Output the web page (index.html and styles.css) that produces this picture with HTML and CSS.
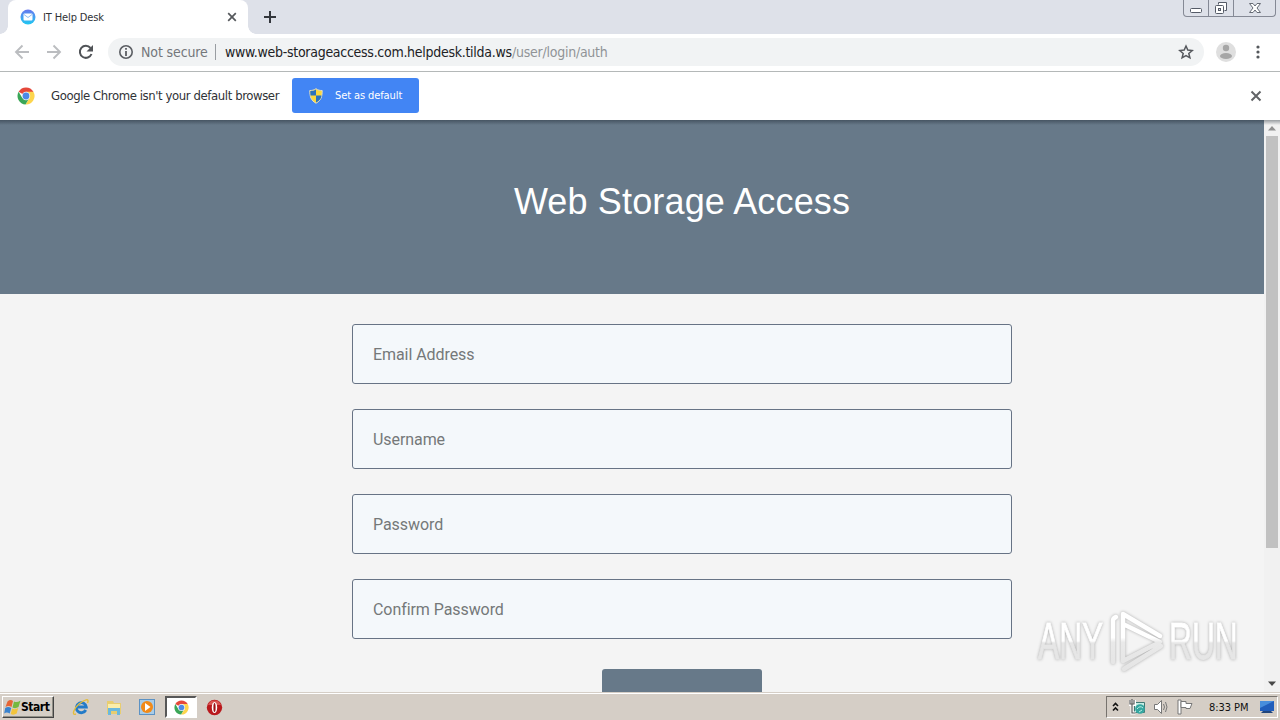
FILE: index.html
```html
<!DOCTYPE html>
<html lang="en">
<head>
<meta charset="utf-8">
<title>IT Help Desk</title>
<link rel="stylesheet" href="styles.css">
</head>
<body>
<svg class="defs" width="0" height="0">
  <symbol id="chrome" viewBox="0 0 18 18">
    <path d="M9 9 1.600 4.800A8.500 8.500 0 0 1 16.400 4.800Z" fill="#e5483a"/>
    <path d="M9 4.800h7.400A8.500 8.500 0 0 1 8.500 17.500L12.600 11Z" fill="#fdd54d"/>
    <path d="M5.300 11 1.600 4.800A8.500 8.500 0 0 0 8.500 17.500L12 11.500Z" fill="#3aa657"/>
    <circle cx="9" cy="9" r="4.200" fill="#f4f6f8"/>
    <circle cx="9" cy="9" r="3.400" fill="#4d8ae6"/>
  </symbol>
</svg>
<div class="desktop">
  <header class="tabstrip">
    <div class="tab">
      <svg class="favicon" width="16" height="16" viewBox="0 0 16 16"><defs><linearGradient id="mail" x2="0" y2="1"><stop stop-color="#6978ef"/><stop offset="1" stop-color="#20c8f1"/></linearGradient></defs><circle cx="8" cy="8" r="7.500" fill="url(#mail)"/><rect x="3.500" y="4.500" width="9" height="7" rx="1" fill="#fff"/><path d="m4 5.500 4 3 4-3" fill="none" stroke="#8fbdf3"/></svg>
      <span class="tab-title">IT Help Desk</span>
      <svg class="tab-close" width="10" height="10" viewBox="0 0 10 10"><path d="m1.200 1.200 7.600 7.600m0-7.600L1.200 8.800" stroke="#55585c" stroke-width="1.700"/></svg>
    </div>
    <svg class="new-tab" width="14" height="14" viewBox="0 0 14 14"><path d="M7 1v12M1 7h12" stroke="#33363c" stroke-width="2"/></svg>
    <div class="window-buttons">
      <span><svg width="14" height="16" viewBox="0 0 14 16"><rect x="1.500" y="8.500" width="11" height="4" rx="1" fill="#fff" stroke="#555b67"/></svg></span>
      <span><svg width="14" height="16" viewBox="0 0 14 16"><path d="M4.500 4.500v-2h8v8h-2" fill="#fff" stroke="#555b67"/><rect x="1.500" y="5.500" width="8" height="8" rx="1" fill="#fff" stroke="#555b67"/><rect x="4.500" y="8.500" width="2" height="2" fill="#dee1e9" stroke="#555b67"/></svg></span>
      <span class="wide"><svg width="14" height="16" viewBox="0 0 14 16"><path d="M1.500 3.500h3.500l2 2.500 2-2.500h3.500L9 8l3.500 4.500H9L7 10l-2 2.500H1.500L5 8Z" fill="#fff" stroke="#666b75"/></svg></span>
    </div>
  </header>
  <nav class="toolbar">
    <div class="nav-buttons">
      <svg width="16" height="16" viewBox="0 0 16 16"><path d="M15 8H2m6.500-6.500L2 8l6.500 6.500" fill="none" stroke="#bbbdc0" stroke-width="1.900"/></svg>
      <svg width="16" height="16" viewBox="0 0 16 16"><path d="M1 8h13M7.500 1.500 14 8l-6.500 6.500" fill="none" stroke="#bbbdc0" stroke-width="1.900"/></svg>
      <svg width="16" height="16" viewBox="0 0 16 16"><path d="M13.500 10A6 6 0 1 1 12.500 4" fill="none" stroke="#505357" stroke-width="2"/><path d="M15 1v6.500H8.500Z" fill="#505357"/></svg>
    </div>
    <div class="omnibox">
      <svg width="16" height="16" viewBox="0 0 16 16"><circle cx="8" cy="8" r="6.200" fill="none" stroke="#5b5e63" stroke-width="1.600"/><path d="M8 7v5M8 4v1.800" stroke="#5b5e63" stroke-width="1.800"/></svg>
      <span class="secure">Not secure</span>
      <span class="url"><span class="host">www.web-storageaccess.com.helpdesk.tilda.ws</span><span class="path">/user/login/auth</span></span>
      <svg class="star" width="16" height="16" viewBox="0 0 16 16"><path d="m8 2 1.800 4.100 4.400.4-3.400 2.900 1.100 4.400L8 11.500l-3.900 2.300 1.100-4.400-3.400-2.900 4.400-.4Z" fill="none" stroke="#55585d" stroke-width="1.500"/></svg>
    </div>
    <svg class="avatar" width="20" height="20" viewBox="0 0 20 20"><circle cx="10" cy="10" r="10" fill="#dfdfdf"/><circle cx="10" cy="6" r="3.200" fill="#a6a6a6"/><ellipse cx="10" cy="14" rx="6" ry="3" fill="#a6a6a6"/></svg>
    <svg class="kebab" width="4" height="14" viewBox="0 0 4 14"><g fill="#55585c"><circle cx="2" cy="2" r="1.600"/><circle cx="2" cy="7" r="1.600"/><circle cx="2" cy="12" r="1.600"/></g></svg>
  </nav>
  <div class="infobar">
    <svg class="brand" width="18" height="18"><use href="#chrome"/></svg>
    <span class="info-text">Google Chrome isn't your default browser</span>
    <button class="default-button"><svg width="14" height="16" viewBox="0 0 14 16"><path d="M7 .700C5 2.200 3 2.500.800 2.500c0 6 1 10 6.200 12.700 5.200-2.700 6.200-6.700 6.200-12.700C11 2.500 9 2.200 7 .700Z" fill="#fbd83d" stroke="#e2dfc4"/><path d="M7 1.500v6H1.500Q1.200 5 1.300 3 5 3 7 1.500ZM7 7.500h5.500Q12 12 7 14.500Z" fill="#2c72bd"/></svg><span>Set as default</span></button>
    <svg class="info-close" width="12" height="12" viewBox="0 0 12 12"><path d="m1.500 1.500 9 9m0-9-9 9" stroke="#626467" stroke-width="2"/></svg>
  </div>
  <main class="viewport">
    <div class="page">
      <section class="hero"><h1>Web Storage Access</h1></section>
      <form class="login">
        <input type="text" placeholder="Email Address">
        <input type="text" placeholder="Username">
        <input type="password" placeholder="Password">
        <input type="password" placeholder="Confirm Password">
        <button type="button" class="submit" aria-label="Submit"></button>
      </form>
    </div>
    <div class="scrollbar">
      <svg width="16" height="16" viewBox="0 0 16 16"><path d="M4 10.500h8L8 6Z" fill="#909090"/></svg>
      <div class="thumb"></div>
      <svg width="16" height="16" viewBox="0 0 16 16"><path d="M4 5.500h8L8 10Z" fill="#484848"/></svg>
    </div>
    <div class="watermark">
      <span class="any">ANY</span>
      <svg width="60" height="66" viewBox="0 0 60 66"><defs><linearGradient id="fade" gradientUnits="userSpaceOnUse" x1="0" y1="0" x2="0" y2="66"><stop offset=".45" stop-color="#fff"/><stop offset=".52" stop-color="#e9e9e9"/><stop offset="1" stop-color="#e4e4e4"/></linearGradient></defs><path d="M7 54V13q0-3 3-4M17 44V6l37 22M17 16l37 18-37 19V42M18 61l37-23" fill="none" stroke="url(#fade)" stroke-width="4.500" stroke-linejoin="round" stroke-linecap="round"/></svg>
      <span class="run">RUN</span>
    </div>
  </main>
  <footer class="taskbar">
    <button class="start"><svg width="17" height="17" viewBox="0 0 17 17"><path d="M3.500 2.500q3-2.500 5.500-.5L7.500 8Q4.500 6 1.500 8Z" fill="#e66535"/><path d="M10 2.500q3 1.500 6.500-1L14.500 8q-3 2-6 .5Z" fill="#75b840"/><path d="M1.200 9q3-2 6 0l-1.500 5.500q-3-2-5.500 0Z" fill="#3982ce"/><path d="M8.200 9.500q3 1.500 6-.5l-1.500 5.500q-3 2-6 .5Z" fill="#f3c43b"/></svg><span>Start</span></button>
    <div class="tasks">
      <span class="task"><svg width="18" height="18" viewBox="0 0 18 18"><path d="M13.800 12A5 5 0 1 1 14.300 9H5.500" fill="none" stroke="#237bc8" stroke-width="2.800"/><path d="M4 16C-1 18 2 10 7 6S18-.500 15.500 5" fill="none" stroke="#e4bd3b" stroke-width="1.400"/></svg></span>
      <span class="task"><svg width="18" height="18" viewBox="0 0 18 18"><path d="M2 3h6l1 2h7v11H2Z" fill="#e8cd70"/><path d="M3 6h12v6H3Z" fill="#fbedaa"/><path d="M3 10h12v7h-3v-4H6v4H3Z" fill="#6bb8dd"/></svg></span>
      <span class="task"><svg width="18" height="18" viewBox="0 0 18 18"><rect x="1.500" y="1.500" width="15" height="15" fill="#a9cce7" stroke="#5c92c4"/><circle cx="9" cy="9" r="6" fill="#f28a18"/><path d="m7 5 5.500 4L7 13Z" fill="#fff"/></svg></span>
      <span class="task active"><svg width="15" height="15"><use href="#chrome"/></svg></span>
      <span class="task"><svg width="17" height="17" viewBox="0 0 17 17"><circle cx="8.500" cy="8.500" r="7.700" fill="#b9191d"/><path d="M2 6a7 7 0 0 1 13 0Z" fill="#d95552"/><ellipse cx="8.500" cy="8.500" rx="2.700" ry="5.500" fill="#fff"/><ellipse cx="8.500" cy="8.500" rx="1.100" ry="4.600" fill="#9e1115"/></svg></span>
    </div>
    <div class="tray">
      <svg width="7" height="10" viewBox="0 0 7 10"><path d="m1 4 2.500-2.500L6 4M1 8.500 3.500 6 6 8.500" fill="none" stroke="#111" stroke-width="1.600"/></svg>
      <svg class="network" width="16" height="16" viewBox="0 0 16 16"><path d="M5.500 3.500h10v10h-10Z" fill="#c5eee5" stroke="#3f7975"/><path d="M.500 1v4.500h5V1M3 1v13h3.500" fill="none" stroke="#fff" stroke-width="3"/><path d="M1 1v4h4V1M3 0v14h3.500" fill="none" stroke="#5c5c5c" stroke-width="1.200"/><circle cx="11" cy="10" r="4.800" fill="#35a6a0"/><path d="M8 10q3-4 6-1m-4 4 3-2" fill="none" stroke="#bdeee4"/></svg>
      <svg class="sound" width="17" height="16" viewBox="0 0 17 16"><path d="M1.500 5.500h3l4-4v13l-4-4h-3Z" fill="#fff" stroke="#777"/><path d="M10.500 5q2 3 0 6m2-8q3 5 0 10" fill="none" stroke="#777"/></svg>
      <svg class="flag" width="17" height="16" viewBox="0 0 17 16"><path d="M1 1h3v14H1Z" fill="#fff" stroke="#777"/><path d="M4 2.500h5v2h6L13 9.500H9V8.500H4Z" fill="#fff" stroke="#777"/></svg>
      <time>8:33 PM</time>
      <svg class="display" width="16" height="14" viewBox="0 0 16 14"><path d="M1 1h14v10H1Z" fill="#205dbb"/><path d="M1 1h14L1 8Z" fill="#478ddc"/><path d="M4 11h8l2 2H2Z" fill="#21457c"/></svg>
    </div>
  </footer>
</div>
</body>
</html>
```
FILE: styles.css
```css
* { box-sizing: border-box; }
body { margin: 0; font-family: "DejaVu Sans Condensed", "DejaVu Sans", sans-serif; color: #303236; }
svg { display: block; flex: none; }
button { border: 0; padding: 0; font: inherit; }
.defs { position: absolute; }
.desktop { width: 1280px; height: 720px; overflow: hidden; display: flex; flex-direction: column; background: #fff; white-space: nowrap; }

.tabstrip { height: 34px; flex: none; display: flex; align-items: flex-start; background: #dee1e9; padding-left: 8px; }
.tab { width: 240px; height: 34px; display: flex; align-items: center; background: #fff; border-radius: 8px 8px 0 0; padding: 0 11px 0 12px; position: relative; }
.tab::before, .tab::after { content: ""; position: absolute; bottom: 0; width: 8px; height: 8px; }
.tab::before { left: -8px; background: radial-gradient(circle at 0 0, transparent 7.5px, #fff 8px); }
.tab::after { right: -8px; background: radial-gradient(circle at 100% 0, transparent 7.5px, #fff 8px); }
.tab-title { margin-left: 7px; font-size: 11px; letter-spacing: -.12px; }
.tab-close { margin-left: auto; }
.new-tab { margin: 10px 0 0 15px; }
.window-buttons { width: 93px; height: 17px; display: flex; margin-left: auto; margin-right: 4px; border: 1px solid #858995; border-top: 0; border-radius: 0 0 4px 4px; }
.window-buttons span { width: 25px; display: flex; justify-content: center; border-right: 1px solid #858995; }
.window-buttons .wide { flex: 1; border: 0; }

.toolbar { height: 38px; flex: none; display: flex; align-items: center; border-bottom: 1px solid #b4b8b8; padding-bottom: 1px; }
.nav-buttons { width: 108px; display: flex; gap: 16px; padding-left: 14px; }
.omnibox { width: 1096px; height: 28px; display: flex; align-items: center; background: #f1f3f4; border-radius: 14px; padding: 0 10px; font-size: 14px; }
.secure { width: 74px; margin-left: 7px; color: #74777b; letter-spacing: -.12px; }
.url { display: flex; border-left: 1px solid #999da2; padding-left: 9px; line-height: 16px; }
.host { width: 287px; color: #202124; letter-spacing: -.28px; }
.path { color: #909397; letter-spacing: -.25px; }
.star { margin-left: auto; }
.avatar { margin-left: 12px; }
.kebab { margin-left: 20px; }

.infobar { height: 48px; flex: none; display: flex; align-items: center; padding: 0 18px 1px 17px; }
.info-text { width: 241px; margin-left: 16px; font-size: 13px; letter-spacing: -.41px; }
.default-button { width: 127px; height: 35px; display: flex; align-items: center; background: #4285f4; color: #fff; border-radius: 3px; padding-left: 17px; font-size: 11px; }
.default-button span { margin-left: 12px; letter-spacing: -.1px; }
.info-close { margin: 1px 0 0 auto; }

.viewport { height: 572px; flex: none; display: flex; position: relative; overflow: hidden; background: #f4f4f4; }
.viewport::before { content: ""; position: absolute; top: 0; left: 0; width: 100%; height: 5px; background: linear-gradient(rgba(20,30,40,.4), transparent); }
.page { width: 1264px; }
.hero { height: 174px; background: #677989; padding: 60px 0 0 352px; }
h1 { width: 660px; margin: 0; text-align: center; color: #fff; font: 400 36px/44px "Liberation Sans", Arial, sans-serif; letter-spacing: .15px; }
.login { width: 660px; display: flex; flex-direction: column; gap: 25px; margin: 30px 0 0 352px; }
.login input { width: 100%; height: 60px; border: 1px solid #677385; border-radius: 3px; background: #f4f8fb; padding: 0 20px; font: 16px Roboto, sans-serif; letter-spacing: -.07px; }
.login input::placeholder { color: #757879; opacity: 1; }
.submit { width: 160px; height: 60px; align-self: center; margin-top: 5px; background: #677989; border-radius: 3px; }
.scrollbar { width: 16px; display: flex; flex-direction: column; background: #f1f1f1; }
.thumb { width: 12px; height: 412px; margin: 0 2px auto; background: #c1c1c1; }
.watermark { position: absolute; left: 1038px; top: 488px; display: flex; align-items: center; font: 400 52px/66px "Liberation Sans", sans-serif; filter: drop-shadow(0 0 1.5px #aaa); }
.watermark span { width: 66px; color: transparent; background: linear-gradient(#fff 50%, #e6e6e6 53%); background-clip: text; -webkit-background-clip: text; -webkit-text-stroke: 1px transparent; }
.watermark .any, .watermark .run { width: 112px; margin-right: -46px; transform: scaleX(.61); transform-origin: left; }
.watermark svg { margin: 0 3px 0 2px; }

.taskbar { height: 28px; flex: none; display: flex; background: #d5cec6; border-top: 1px solid #d5cec6; box-shadow: inset 0 1px #fff; padding: 3px 2px 1px; font-size: 11px; color: #111; }
.start { width: 52px; height: 22px; display: flex; align-items: center; background: #d5cec6; border: 1px solid; border-color: #fff #444 #444 #fff; box-shadow: inset -1px -1px #929087; color: #000; font-weight: 700; font-size: 12px; padding-left: 1px; }
.start span { letter-spacing: -.45px; }
.tasks { display: flex; margin-left: 10px; }
.task { width: 33px; height: 22px; display: flex; align-items: center; justify-content: center; }
.active { width: 32px; margin: 0 1px 0 2px; background: #fff; border: 2px solid; border-color: #575757 #fff #fff #575757; }
.tray { width: 172px; height: 22px; display: flex; align-items: center; margin-left: auto; border: 1px solid; border-color: #77736e #fff #fff #77736e; padding-left: 5px; }
.network { margin-left: 10px; }
.sound { margin-left: 8px; }
.flag { margin-left: 7px; }
time { width: 50px; margin-left: 15px; letter-spacing: -.05px; }
```
